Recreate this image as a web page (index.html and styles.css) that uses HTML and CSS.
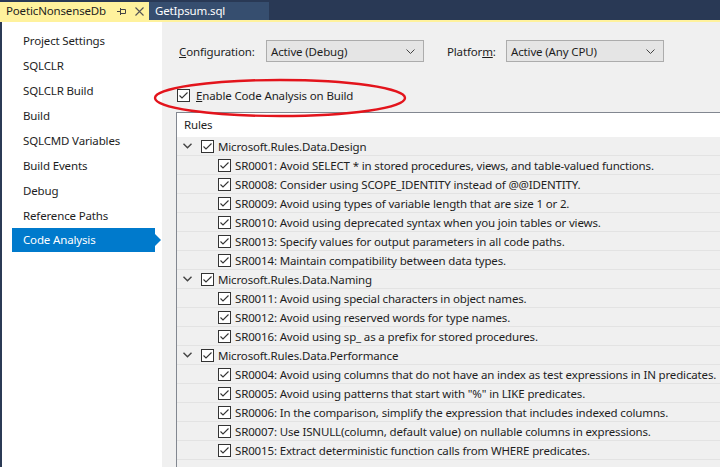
FILE: index.html
```html
<!DOCTYPE html>
<html>
<head>
<meta charset="utf-8">
<link rel="stylesheet" href="styles.css">
</head>
<body>
<div class="window">
  <div class="tabbar">
    <div class="tab active">
      <span class="tab-title">PoeticNonsenseDb</span>
      <svg class="pin" width="9" height="7" viewBox="0 0 9 7"><path d="M0 3.5H3M3.5 0V7M3.5 1.5H8.5V5.5H3.5" fill="none" stroke="#444" stroke-width="1"/></svg>
      <svg class="close" width="9" height="9" viewBox="0 0 9 9"><path d="M0.5 0.5L8.5 8.5M8.5 0.5L0.5 8.5" stroke="#555" stroke-width="1.1"/></svg>
    </div>
    <div class="tab inactive"><span class="tab-title">GetIpsum.sql</span></div>
  </div>
  <div class="tabline"></div>
  <div class="body">
    <nav class="nav">
      <div class="nav-item">Project Settings</div>
      <div class="nav-item">SQLCLR</div>
      <div class="nav-item">SQLCLR Build</div>
      <div class="nav-item">Build</div>
      <div class="nav-item">SQLCMD Variables</div>
      <div class="nav-item">Build Events</div>
      <div class="nav-item">Debug</div>
      <div class="nav-item">Reference Paths</div>
      <div class="nav-item selected">Code Analysis</div>
    </nav>
    <main class="content">
      <div class="config-row">
        <span class="label label-config"><u>C</u>onfiguration:</span>
        <div class="select"><span>Active (Debug)</span><svg class="chev" width="9" height="5" viewBox="0 0 9 5"><path d="M0.5 0.5L4.5 4.5L8.5 0.5" fill="none" stroke="#444" stroke-width="1"/></svg></div>
        <span class="label label-platform">Platfor<u>m</u>:</span>
        <div class="select"><span>Active (Any CPU)</span><svg class="chev" width="9" height="5" viewBox="0 0 9 5"><path d="M0.5 0.5L4.5 4.5L8.5 0.5" fill="none" stroke="#444" stroke-width="1"/></svg></div>
      </div>
      <div class="sep"></div>
      <div class="enable-row">
        <svg class="cb" width="13" height="13" viewBox="0 0 13 13"><rect x="0.5" y="0.5" width="12" height="12" fill="#fff" stroke="#333"/><path d="M2.5 6.5L5 9L10.5 3.5" fill="none" stroke="#333" stroke-width="1.1"/></svg>
        <span><u>E</u>nable Code Analysis on Build</span>
      </div>
      <div class="grid">
        <div class="grid-header">Rules</div>

        <div class="row group">
          <svg class="expander" width="9" height="6" viewBox="0 0 9 6"><path d="M0.5 0.8L4.5 4.8L8.5 0.8" fill="none" stroke="#444" stroke-width="1.4"/></svg>
          <svg class="cb" width="13" height="13" viewBox="0 0 13 13"><rect x="0.5" y="0.5" width="12" height="12" fill="#fff" stroke="#333"/><path d="M2.5 6.5L5 9L10.5 3.5" fill="none" stroke="#333" stroke-width="1.1"/></svg>
          <span>Microsoft.Rules.Data.Design</span>
        </div>
        <div class="row child"><svg class="cb" width="13" height="13" viewBox="0 0 13 13"><rect x="0.5" y="0.5" width="12" height="12" fill="#fff" stroke="#333"/><path d="M2.5 6.5L5 9L10.5 3.5" fill="none" stroke="#333" stroke-width="1.1"/></svg><span>SR0001: Avoid SELECT * in stored procedures, views, and table-valued functions.</span></div>
        <div class="row child"><svg class="cb" width="13" height="13" viewBox="0 0 13 13"><rect x="0.5" y="0.5" width="12" height="12" fill="#fff" stroke="#333"/><path d="M2.5 6.5L5 9L10.5 3.5" fill="none" stroke="#333" stroke-width="1.1"/></svg><span>SR0008: Consider using SCOPE_IDENTITY instead of @@IDENTITY.</span></div>
        <div class="row child"><svg class="cb" width="13" height="13" viewBox="0 0 13 13"><rect x="0.5" y="0.5" width="12" height="12" fill="#fff" stroke="#333"/><path d="M2.5 6.5L5 9L10.5 3.5" fill="none" stroke="#333" stroke-width="1.1"/></svg><span>SR0009: Avoid using types of variable length that are size 1 or 2.</span></div>
        <div class="row child"><svg class="cb" width="13" height="13" viewBox="0 0 13 13"><rect x="0.5" y="0.5" width="12" height="12" fill="#fff" stroke="#333"/><path d="M2.5 6.5L5 9L10.5 3.5" fill="none" stroke="#333" stroke-width="1.1"/></svg><span>SR0010: Avoid using deprecated syntax when you join tables or views.</span></div>
        <div class="row child"><svg class="cb" width="13" height="13" viewBox="0 0 13 13"><rect x="0.5" y="0.5" width="12" height="12" fill="#fff" stroke="#333"/><path d="M2.5 6.5L5 9L10.5 3.5" fill="none" stroke="#333" stroke-width="1.1"/></svg><span>SR0013: Specify values for output parameters in all code paths.</span></div>
        <div class="row child"><svg class="cb" width="13" height="13" viewBox="0 0 13 13"><rect x="0.5" y="0.5" width="12" height="12" fill="#fff" stroke="#333"/><path d="M2.5 6.5L5 9L10.5 3.5" fill="none" stroke="#333" stroke-width="1.1"/></svg><span>SR0014: Maintain compatibility between data types.</span></div>

        <div class="row group">
          <svg class="expander" width="9" height="6" viewBox="0 0 9 6"><path d="M0.5 0.8L4.5 4.8L8.5 0.8" fill="none" stroke="#444" stroke-width="1.4"/></svg>
          <svg class="cb" width="13" height="13" viewBox="0 0 13 13"><rect x="0.5" y="0.5" width="12" height="12" fill="#fff" stroke="#333"/><path d="M2.5 6.5L5 9L10.5 3.5" fill="none" stroke="#333" stroke-width="1.1"/></svg>
          <span>Microsoft.Rules.Data.Naming</span>
        </div>
        <div class="row child"><svg class="cb" width="13" height="13" viewBox="0 0 13 13"><rect x="0.5" y="0.5" width="12" height="12" fill="#fff" stroke="#333"/><path d="M2.5 6.5L5 9L10.5 3.5" fill="none" stroke="#333" stroke-width="1.1"/></svg><span>SR0011: Avoid using special characters in object names.</span></div>
        <div class="row child"><svg class="cb" width="13" height="13" viewBox="0 0 13 13"><rect x="0.5" y="0.5" width="12" height="12" fill="#fff" stroke="#333"/><path d="M2.5 6.5L5 9L10.5 3.5" fill="none" stroke="#333" stroke-width="1.1"/></svg><span>SR0012: Avoid using reserved words for type names.</span></div>
        <div class="row child"><svg class="cb" width="13" height="13" viewBox="0 0 13 13"><rect x="0.5" y="0.5" width="12" height="12" fill="#fff" stroke="#333"/><path d="M2.5 6.5L5 9L10.5 3.5" fill="none" stroke="#333" stroke-width="1.1"/></svg><span>SR0016: Avoid using sp_ as a prefix for stored procedures.</span></div>

        <div class="row group">
          <svg class="expander" width="9" height="6" viewBox="0 0 9 6"><path d="M0.5 0.8L4.5 4.8L8.5 0.8" fill="none" stroke="#444" stroke-width="1.4"/></svg>
          <svg class="cb" width="13" height="13" viewBox="0 0 13 13"><rect x="0.5" y="0.5" width="12" height="12" fill="#fff" stroke="#333"/><path d="M2.5 6.5L5 9L10.5 3.5" fill="none" stroke="#333" stroke-width="1.1"/></svg>
          <span>Microsoft.Rules.Data.Performance</span>
        </div>
        <div class="row child"><svg class="cb" width="13" height="13" viewBox="0 0 13 13"><rect x="0.5" y="0.5" width="12" height="12" fill="#fff" stroke="#333"/><path d="M2.5 6.5L5 9L10.5 3.5" fill="none" stroke="#333" stroke-width="1.1"/></svg><span>SR0004: Avoid using columns that do not have an index as test expressions in IN predicates.</span></div>
        <div class="row child"><svg class="cb" width="13" height="13" viewBox="0 0 13 13"><rect x="0.5" y="0.5" width="12" height="12" fill="#fff" stroke="#333"/><path d="M2.5 6.5L5 9L10.5 3.5" fill="none" stroke="#333" stroke-width="1.1"/></svg><span>SR0005: Avoid using patterns that start with "%" in LIKE predicates.</span></div>
        <div class="row child"><svg class="cb" width="13" height="13" viewBox="0 0 13 13"><rect x="0.5" y="0.5" width="12" height="12" fill="#fff" stroke="#333"/><path d="M2.5 6.5L5 9L10.5 3.5" fill="none" stroke="#333" stroke-width="1.1"/></svg><span>SR0006: In the comparison, simplify the expression that includes indexed columns.</span></div>
        <div class="row child"><svg class="cb" width="13" height="13" viewBox="0 0 13 13"><rect x="0.5" y="0.5" width="12" height="12" fill="#fff" stroke="#333"/><path d="M2.5 6.5L5 9L10.5 3.5" fill="none" stroke="#333" stroke-width="1.1"/></svg><span>SR0007: Use ISNULL(column, default value) on nullable columns in expressions.</span></div>
        <div class="row child"><svg class="cb" width="13" height="13" viewBox="0 0 13 13"><rect x="0.5" y="0.5" width="12" height="12" fill="#fff" stroke="#333"/><path d="M2.5 6.5L5 9L10.5 3.5" fill="none" stroke="#333" stroke-width="1.1"/></svg><span>SR0015: Extract deterministic function calls from WHERE predicates.</span></div>
        <div class="row empty"></div>
      </div>
    </main>
  </div>
  <svg class="highlight" width="258" height="44" viewBox="0 0 258 44"><ellipse cx="128" cy="21" rx="125" ry="18" fill="none" stroke="#e3141c" stroke-width="2.4"/></svg>
</div>
</body>
</html>
```
FILE: styles.css
```css
* { box-sizing: border-box; }
html, body { margin: 0; padding: 0; }
body {
  width: 720px;
  height: 467px;
  overflow: hidden;
  font-family: "Noto Sans", "Open Sans", sans-serif;
  font-size: 11.5px;
  letter-spacing: -0.15px;
  color: #1e1e1e;
  background: #f0f0f0;
}
.window {
  position: relative;
  width: 720px;
  height: 467px;
  display: flex;
  flex-direction: column;
}
.tabbar {
  height: 20px;
  background: #293955;
  display: flex;
  align-items: flex-end;
}
.tab {
  height: 18px;
  display: flex;
  align-items: center;
  line-height: 18px;
}
.tab.active {
  width: 149px;
  background: #fff29d;
  color: #1e1e1e;
  padding-left: 6px;
}
.tab.active .tab-title { width: 111px; }
.close { margin-left: 9px; }
.tab.inactive {
  width: 120px;
  background: #364e6f;
  color: #ffffff;
  padding-left: 6px;
}
.tabline {
  height: 2px;
  background: #fff29d;
}
.body {
  flex: 1;
  display: flex;
  min-height: 0;
}
.nav {
  width: 162px;
  background: #ffffff;
  border-left: 2px solid #2b3a55;
  padding: 6px 7px 0 10px;
}
.nav-item {
  position: relative;
  height: 25px;
  line-height: 25px;
  padding-left: 11px;
  white-space: nowrap;
}
.nav-item.selected {
  background: #007acc;
  color: #ffffff;
  height: 24px;
  line-height: 23px;
}
.nav-item.selected::after {
  content: "";
  position: absolute;
  right: -6px;
  top: 6px;
  border-left: 6px solid #007acc;
  border-top: 6px solid transparent;
  border-bottom: 6px solid transparent;
}
.content {
  flex: 1;
  min-width: 0;
  padding: 18px 0 0 14px;
  display: flex;
  flex-direction: column;
}
.config-row {
  display: flex;
  align-items: center;
  height: 22px;
  padding-left: 3px;
}
.label { white-space: nowrap; }
.label-config { width: 87px; }
.label-platform { width: 59px; margin-left: 23px; }
.select {
  width: 158px;
  height: 22px;
  background: #e5e5e5;
  border: 1px solid #acacac;
  display: flex;
  align-items: center;
  justify-content: space-between;
  padding: 0 8px 0 4px;
}
.sep {
  height: 1px;
  background: #a0a0a0;
  margin-top: 16px;
}
.enable-row {
  display: flex;
  align-items: center;
  gap: 6px;
  height: 13px;
  margin-top: 11px;
  padding-left: 1px;
}
.cb { flex: none; display: block; }
.grid {
  margin-top: 10px;
  flex: 1;
  border-top: 1px solid #828790;
  border-left: 1px solid #828790;
  background: #f0f0f0;
}
.grid-header {
  height: 24px;
  line-height: 24px;
  background: #ffffff;
  padding-left: 7px;
}
.row {
  height: 19px;
  display: flex;
  align-items: center;
  border-bottom: 1px solid #e3e3e3;
  white-space: nowrap;
}
.row.group { padding-left: 5px; }
.expander { flex: none; margin: 0 9px 0 1px; }
.row.group .cb { margin-right: 4px; }
.row.child { padding-left: 41px; }
.row.child .cb { margin-right: 4px; }
.highlight {
  position: absolute;
  left: 152px;
  top: 77px;
}
```
